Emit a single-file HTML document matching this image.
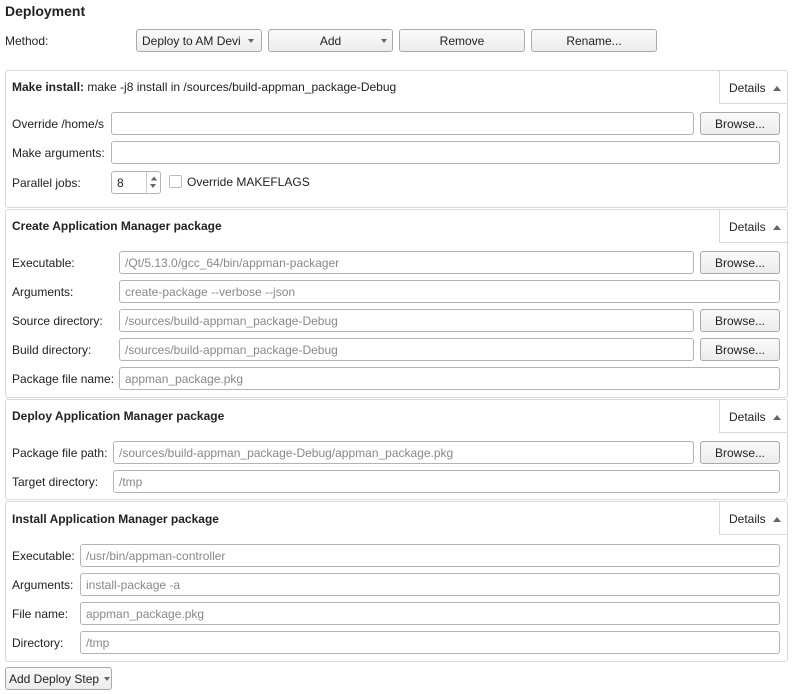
<!DOCTYPE html><html><head><style>
body{margin:0;width:793px;height:694px;background:#fff;font-family:"Liberation Sans",sans-serif;font-size:12px;color:#222;position:relative;overflow:hidden}
div{position:absolute;box-sizing:border-box}
.t{white-space:nowrap;line-height:14px}
.in{height:23px;border:1px solid #b4b4b4;border-radius:3px;background:#fff;color:#888;padding:5px 5px 3px;white-space:nowrap;overflow:hidden;line-height:13px}
.btn{height:23px;border:1px solid #aaa;border-radius:3px;background:linear-gradient(#fafafa,#ececec);text-align:center;line-height:22px;white-space:nowrap}
.pan{border:1px solid #d8d8d8;border-radius:3px;left:5px;width:783px}
.det{left:713px;top:-1px;width:69px;height:34px;border-left:1px solid #d8d8d8;border-bottom:1px solid #d8d8d8;line-height:36px;padding-left:9px}
.arr{display:inline-block;width:0;height:0;border-left:4px solid transparent;border-right:4px solid transparent;border-bottom:5px solid #666;margin-left:7px;vertical-align:1px}
.dn{display:inline-block;width:0;height:0;border-left:3.5px solid transparent;border-right:3.5px solid transparent;border-top:4px solid #666}
b{font-weight:bold}
</style></head><body>
<div class="t" style="left:5px;top:4px;font-size:14px;font-weight:bold">Deployment</div>
<div class="t" style="left:5px;top:34px">Method:</div>
<div class="btn" style="left:136px;top:29px;width:126px;text-align:left;padding-left:5px">Deploy to AM Devi <span class="dn" style="margin-left:4px;vertical-align:2px"></span></div>
<div class="btn" style="left:268px;top:29px;width:125px">Add<span class="dn" style="position:absolute;right:5px;top:9px"></span></div>
<div class="btn" style="left:399px;top:29px;width:126px">Remove</div>
<div class="btn" style="left:531px;top:29px;width:126px">Rename...</div>

<div class="pan" style="top:70px;height:138px"><div class="det">Details<span class="arr"></span></div></div>
<div class="t" style="left:12px;top:80px"><b>Make install:</b> make -j8 install in /sources/build-appman_package-Debug</div>
<div class="t" style="left:12px;top:117px">Override /home/s</div>
<div class="in" style="left:111px;top:112px;width:583px"></div>
<div class="btn" style="left:700px;top:112px;width:80px">Browse...</div>
<div class="t" style="left:12px;top:146px">Make arguments:</div>
<div class="in" style="left:111px;top:141px;width:669px"></div>
<div class="t" style="left:12px;top:176px">Parallel jobs:</div>
<div class="in" style="left:111px;top:171px;width:50px;color:#222">8</div>
<div style="left:146px;top:172px;width:14px;height:21px;border-left:1px solid #ccc"><span class="arr" style="position:absolute;left:-4px;top:4px;transform:scale(.8)"></span><span class="dn" style="position:absolute;left:3px;top:12px"></span></div>
<div style="left:169px;top:175px;width:13px;height:13px;border:1px solid #bbb;border-radius:2px"></div>
<div class="t" style="left:187px;top:175px">Override MAKEFLAGS</div>

<div class="pan" style="top:209px;height:189px"><div class="det">Details<span class="arr"></span></div></div>
<div class="t" style="left:12px;top:219px"><b>Create Application Manager package</b></div>
<div class="t" style="left:12px;top:256px">Executable:</div>
<div class="in" style="left:119px;top:251px;width:575px">/Qt/5.13.0/gcc_64/bin/appman-packager</div>
<div class="btn" style="left:700px;top:251px;width:80px">Browse...</div>
<div class="t" style="left:12px;top:285px">Arguments:</div>
<div class="in" style="left:119px;top:280px;width:661px">create-package --verbose --json</div>
<div class="t" style="left:12px;top:314px">Source directory:</div>
<div class="in" style="left:119px;top:309px;width:575px">/sources/build-appman_package-Debug</div>
<div class="btn" style="left:700px;top:309px;width:80px">Browse...</div>
<div class="t" style="left:12px;top:343px">Build directory:</div>
<div class="in" style="left:119px;top:338px;width:575px">/sources/build-appman_package-Debug</div>
<div class="btn" style="left:700px;top:338px;width:80px">Browse...</div>
<div class="t" style="left:12px;top:372px">Package file name:</div>
<div class="in" style="left:119px;top:367px;width:661px">appman_package.pkg</div>

<div class="pan" style="top:399px;height:101px"><div class="det">Details<span class="arr"></span></div></div>
<div class="t" style="left:12px;top:409px"><b>Deploy Application Manager package</b></div>
<div class="t" style="left:12px;top:446px">Package file path:</div>
<div class="in" style="left:113px;top:441px;width:581px">/sources/build-appman_package-Debug/appman_package.pkg</div>
<div class="btn" style="left:700px;top:441px;width:80px">Browse...</div>
<div class="t" style="left:12px;top:475px">Target directory:</div>
<div class="in" style="left:113px;top:470px;width:667px">/tmp</div>

<div class="pan" style="top:501px;height:161px"><div class="det">Details<span class="arr"></span></div></div>
<div class="t" style="left:12px;top:512px"><b>Install Application Manager package</b></div>
<div class="t" style="left:12px;top:549px">Executable:</div>
<div class="in" style="left:80px;top:544px;width:700px">/usr/bin/appman-controller</div>
<div class="t" style="left:12px;top:578px">Arguments:</div>
<div class="in" style="left:80px;top:573px;width:700px">install-package -a</div>
<div class="t" style="left:12px;top:607px">File name:</div>
<div class="in" style="left:80px;top:602px;width:700px">appman_package.pkg</div>
<div class="t" style="left:12px;top:636px">Directory:</div>
<div class="in" style="left:80px;top:631px;width:700px">/tmp</div>

<div class="btn" style="left:5px;top:667px;width:107px;text-align:left;padding-left:3px">Add Deploy Step <span class="dn" style="margin-left:2px;vertical-align:2px"></span></div>
</body></html>
